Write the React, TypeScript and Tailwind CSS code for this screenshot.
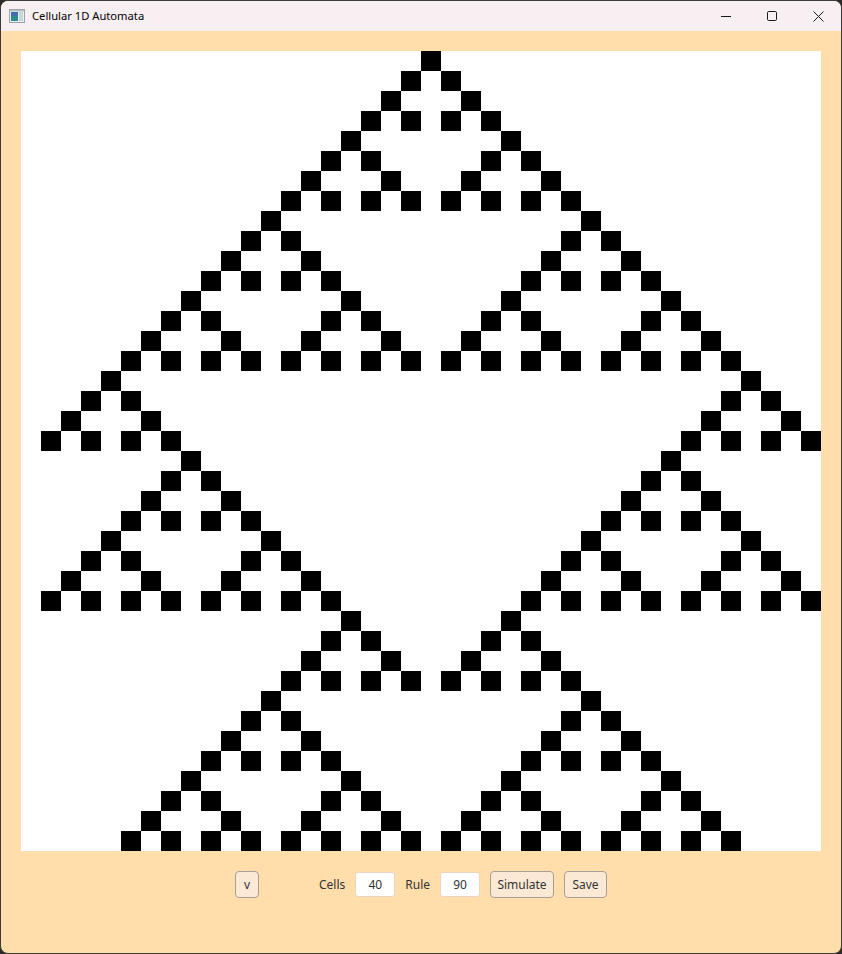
import { useMemo } from "react";

const CELLS = 40;
const RULE = 90;
const CELL_SIZE = 20;

// run a 1D elementary automaton, wrapping at the edges
function simulate(cells: number, rule: number, steps: number) {
  const rows: number[][] = [];
  let row = new Array(cells).fill(0);
  row[Math.floor(cells / 2)] = 1;
  for (let r = 0; r < steps; r++) {
    rows.push(row);
    const next = new Array(cells).fill(0);
    for (let i = 0; i < cells; i++) {
      const l = row[(i - 1 + cells) % cells];
      const c = row[i];
      const rt = row[(i + 1) % cells];
      next[i] = (rule >> ((l << 2) | (c << 1) | rt)) & 1;
    }
    row = next;
  }
  return rows;
}

const AppIcon = () => (
  <svg width="16" height="14" viewBox="0 0 16 14">
    <rect x="0.5" y="0.5" width="15" height="13" fill="#e9eef0" stroke="#9aa3a8" />
    <rect x="2" y="3" width="7" height="9" fill="#2f8a8f" />
    <rect x="2" y="3" width="7" height="4" fill="#3f6fb5" />
    <rect x="10" y="3" width="4" height="9" fill="#c9d6d8" />
    <rect x="1" y="1" width="14" height="1.5" fill="#b8c2c6" />
  </svg>
);

const WindowButtons = () => (
  <div className="flex items-center h-full">
    <div className="w-[46px] h-full flex items-center justify-center">
      <svg width="10" height="10" viewBox="0 0 10 10">
        <path d="M0 5.5 H10" stroke="#1a1a1a" strokeWidth="1" />
      </svg>
    </div>
    <div className="w-[46px] h-full flex items-center justify-center">
      <svg width="10" height="10" viewBox="0 0 10 10">
        <rect x="0.5" y="0.5" width="9" height="9" rx="1.2" fill="none" stroke="#1a1a1a" strokeWidth="1" />
      </svg>
    </div>
    <div className="w-[46px] h-full flex items-center justify-center">
      <svg width="11" height="11" viewBox="0 0 11 11">
        <path d="M0.5 0.5 L10.5 10.5 M10.5 0.5 L0.5 10.5" stroke="#1a1a1a" strokeWidth="1" />
      </svg>
    </div>
  </div>
);

const FxButton = ({ label, width }: { label: string; width: string }) => (
  <button
    className={`${width} h-[27px] rounded-[4px] border border-[#a69f97] bg-[#fbe9d6] text-[12px] text-[#333333] leading-none flex items-center justify-center`}
  >
    {label}
  </button>
);

const FxField = ({ value }: { value: string }) => (
  <input
    readOnly
    value={value}
    className="w-[40px] h-[25px] rounded-[3px] border border-[#e8d6c2] bg-white text-center text-[12px] text-[#333333] outline-none"
  />
);

export default function App() {
  const rows = useMemo(() => simulate(CELLS, RULE, CELLS), []);

  return (
    <div className="w-[842px] h-[954px] bg-[#2c2c2c]" style={{ fontFamily: '"Segoe UI", "Noto Sans", "Open Sans", sans-serif' }}>
      <div className="h-full flex flex-col rounded-[8px] overflow-hidden border border-[#3b3b3b] bg-[#ffdeab]">
        {/* Title bar */}
        <div className="h-[30px] shrink-0 flex items-center justify-between bg-[#f8eff3]">
          <div className="flex items-center pl-[8px] gap-[7px]">
            <AppIcon />
            <span className="text-[11.2px] text-black">Cellular 1D Automata</span>
          </div>
          <WindowButtons />
        </div>

        {/* Content */}
        <div className="flex-1 flex flex-col items-center pt-[20px]">
          <svg width={CELLS * CELL_SIZE} height={CELLS * CELL_SIZE} className="bg-white block">
            {rows.map((row, r) =>
              row.map((v, i) =>
                v ? (
                  <rect
                    key={`${r}-${i}`}
                    x={i * CELL_SIZE}
                    y={r * CELL_SIZE}
                    width={CELL_SIZE}
                    height={CELL_SIZE}
                    fill="#000"
                  />
                ) : null
              )
            )}
          </svg>

          <div className="mt-[20px] flex items-center gap-[10px] text-[12px] text-[#333333]">
            <FxButton label="v" width="w-[24px]" />
            <div className="w-[40px]" />
            <span>Cells</span>
            <FxField value="40" />
            <span>Rule</span>
            <FxField value="90" />
            <FxButton label="Simulate" width="w-[64px]" />
            <FxButton label="Save" width="w-[43px]" />
          </div>
        </div>
      </div>
    </div>
  );
}
